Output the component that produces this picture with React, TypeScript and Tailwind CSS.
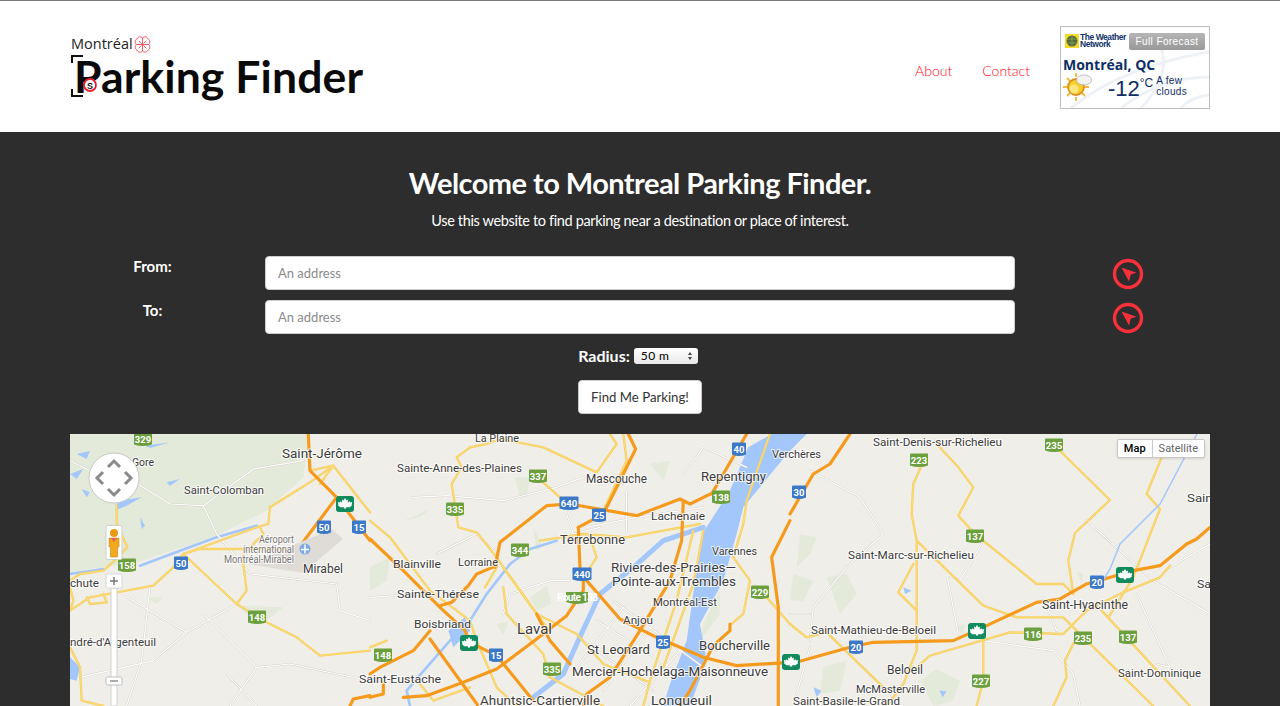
// Montreal Parking Finder landing page
import React from "react";

const bodyFont = { fontFamily: '"Lato", "Open Sans", sans-serif' };

// ── map data: road strings are in 3x crop coordinates, grouped by map section ──
type Roads = { x: number; orange: string[]; yellow: string[]; white: string[]; water: string[]; river: string[]; green: string[] };

const sections: Roads[] = [
  {
    x: 0,
    green: [
      "0,0 715,0 700,130 590,230 430,310 200,385 60,405 0,420",
      "500,515 640,520 590,560 540,545",
      "230,490 280,490 260,510",
      "520,120 555,130 540,155",
    ],
    water: [
      "20,60 60,50 50,75",
      "0,120 40,105 20,135",
      "35,165 60,175 50,190",
      "145,200 215,190 170,215 135,230",
      "225,35 300,25 240,42",
      "290,145 330,135 300,155",
      "210,250 225,275 215,285",
      "0,670 30,700 20,740 0,735",
    ],
    river: ["210,395 330,350 440,310 560,275", "0,420 100,405"],
    white: [
      "0,80 60,110 170,130 300,210 400,215 550,105 700,80",
      "400,215 440,300 540,420 800,450 810,530 900,560",
      "170,490 350,595 500,510",
      "350,595 250,680 30,730",
      "405,545 560,700 480,816",
      "560,700 660,690 800,720 900,740",
      "240,460 215,680 170,816",
      "470,720 560,816",
    ],
    orange: ["715,0 720,110 800,190 900,320", "800,190 740,270 680,350", "840,816 850,795 900,785"],
    yellow: [
      "140,215 140,270 172,340 140,375 100,410 30,420 0,440",
      "0,530 60,490 250,455 310,400 340,360 390,345 680,345",
      "340,360 500,510 590,565 680,610 750,665 900,650",
      "500,510 530,470 520,390 520,360 580,300 570,280",
      "340,360 560,280 595,270 600,220 720,145 790,95 900,235",
      "720,110 790,95 750,150",
      "0,640 30,700 35,800 100,816",
      "0,460 10,500 0,530",
      "50,490 60,510 110,505 100,480",
    ],
  },
  {
    x: 300,
    green: [
      "0,400 60,370 50,440 0,470",
      "480,490 530,455 545,510 500,530",
      "380,570 415,565 400,605",
      "100,260 180,225 150,250",
      "435,130 480,130 470,190 450,190",
      "490,280 520,340 500,350",
      "840,90 900,80 880,140",
      "1000,570 1050,470 1050,540 990,620",
    ],
    water: [
      "1205,0 1135,40 1080,170 1000,295 975,440 950,620 900,750 880,816 960,816 1010,680 990,570 1060,440 1100,300 1120,220 1260,50 1260,0",
      "235,590 285,550 300,590 250,640",
    ],
    river: [
      "1000,280 880,320 790,400 690,480 620,630 580,720 490,790",
      "560,320 480,345 420,390 350,480 300,560 240,620 170,700 110,770 120,816",
    ],
    white: [
      "0,490 150,480 260,520",
      "130,190 230,185 400,200 560,160 640,130",
      "650,280 800,250 1000,220",
      "600,440 540,440 420,480 400,540",
      "730,500 1000,700",
      "680,560 900,700",
      "640,620 850,770",
      "760,520 620,700",
      "850,570 700,770",
      "930,650 780,816",
      "200,360 320,300 380,360",
      "940,120 1000,40 1130,100",
      "770,170 770,290",
      "590,240 610,300 690,280",
    ],
    orange: [
      "0,315 100,410 210,520 285,590 300,625 380,665 490,800",
      "180,615 325,816",
      "375,400 390,325 530,215 600,210 800,245 930,195 960,210 1025,178",
      "210,515 245,505 295,455 320,420 380,395",
      "625,280 700,240 770,100 797,45 775,0",
      "630,400 625,280",
      "640,420 640,470 590,545 500,615 380,705 280,745 170,785 100,790",
      "650,440 750,555 860,610 1000,670 1100,695 1260,685",
      "500,540 540,620 600,690",
      "180,590 130,650 30,700 0,720",
      "40,745 40,780 0,790",
      "940,200 935,320 900,440 810,590 720,730 650,780 640,816",
      "1025,180 1130,0",
      "1260,260 1205,370 1225,520 1225,816",
      "1080,570 1080,590 1030,635 960,770 930,816",
    ],
    yellow: [
      "0,260 60,310 180,470 300,560 320,620 380,760 440,816",
      "390,15 520,40 680,115 740,30 720,0",
      "300,40 350,30 390,15",
      "300,40 260,70 275,100 245,150 265,280 320,295 380,370 400,400 530,580",
      "480,110 570,190",
      "400,400 500,540 620,600 700,690 840,745",
      "345,460 380,400",
      "400,460 410,540 520,660 540,730 700,816",
      "510,320 640,300 770,310 880,290 990,270",
      "1200,0 1130,200 1120,270 1090,370 1140,440 1120,540 1085,570",
      "1190,490 1260,570",
      "660,310 680,370 660,400",
      "760,0 770,80 700,230",
      "970,290 920,500 840,740 820,816",
      "1000,290 970,450 880,700",
      "0,640 50,620",
      "150,750 190,800 300,760",
    ],
  },
  {
    x: 720,
    green: [
      "30,300 80,310 60,360 20,400",
      "110,430 170,420 200,480 150,540",
      "10,420 70,440 40,500 0,500",
      "390,740 440,705 510,740 490,800 430,816",
      "495,580 525,570 520,600",
      "860,415 880,420 875,450",
      "100,700 170,680 150,770 90,780",
    ],
    water: ["0,0 50,0 0,50", "70,760 95,770 80,790", "448,770 470,772 458,790", "340,460 365,470 345,480"],
    river: [],
    white: [
      "60,110 210,190 280,300 170,400 70,520 60,620",
      "575,330 510,440 470,420 505,600",
      "580,620 790,650 850,720 870,816",
      "890,260 1090,440 1260,540",
      "1140,400 1260,330",
      "1040,480 1140,700 1100,690",
      "0,540 60,540",
      "60,640 20,780",
      "760,490 800,590",
    ],
    orange: [
      "0,240 70,120 120,90 180,0",
      "0,690 180,640 250,625 490,620 590,575 740,505 810,495 890,450 1030,410 1110,395 1190,330 1220,315 1260,280",
    ],
    yellow: [
      "440,30 505,100 550,160 505,245 555,300 740,450 820,450 850,480",
      "410,60 370,150 365,240 380,320 380,520 380,650 340,750 290,816",
      "380,320 580,515 680,550 820,550 860,590 1090,816",
      "810,50 850,90 960,198 855,297 835,380 850,480",
      "1115,70 1070,180 1110,225 1030,430 955,550",
      "1140,395 1110,430 1000,475 890,530 820,600 660,595 420,665 380,700",
      "935,530 1200,816",
      "580,620 580,740 560,816",
      "855,620 825,680 830,730 790,816",
      "0,570 50,610 110,595 280,760",
      "370,390 325,475 380,530",
    ],
  },
];

type Label = [string, number, number, number, number?, string?];
// text, x, baseline, width, size, colour
const labels: Label[] = [
  ["Gore", 62, 32, 22, 11],
  ["Saint-Colomban", 114, 60, 80, 11],
  ["Saint-Jérôme", 212, 24, 80, 12.5],
  ["Aéroport", 189, 109, 35, 10, "#777"],
  ["international", 173, 119, 51, 10, "#777"],
  ["Montréal-Mirabel", 154, 129, 70, 10, "#777"],
  ["Mirabel", 233, 139, 40, 12],
  ["chute", 0, 153, 29, 11],
  ["ndré-d'Argenteuil", 0, 212, 86, 11],
  ["Saint-Eustache", 289, 249, 82, 11],
  ["La Plaine", 405, 8, 44, 11],
  ["Sainte-Anne-des-Plaines", 327, 38, 125, 11],
  ["Mascouche", 516, 49, 61, 12],
  ["Repentigny", 631, 47, 65, 12.5],
  ["Lachenaie", 581, 86, 54, 11.5],
  ["Terrebonne", 490, 110, 65, 12.5],
  ["Varennes", 642, 121, 45, 11],
  ["Blainville", 323, 134, 48, 11.5],
  ["Lorraine", 388, 132, 40, 11],
  ["Riviere-des-Prairies—", 541, 138, 125, 12.5],
  ["Pointe-aux-Trembles", 542, 152, 124, 12.5],
  ["Sainte-Thérèse", 327, 164, 82, 11.5],
  ["Montréal-Est", 583, 172, 64, 11],
  ["Boisbriand", 344, 194, 57, 11.5],
  ["Anjou", 553, 190, 30, 11.5],
  ["Laval", 447, 200, 35, 15],
  ["St Leonard", 517, 220, 63, 12.5],
  ["Boucherville", 629, 216, 71, 12.5],
  ["Mercier-Hochelaga-Maisonneuve", 502, 242, 196, 12.5],
  ["Ahuntsic-Cartierville", 410, 271, 120, 12],
  ["Longueuil", 581, 271, 61, 12],
  ["Verchères", 702, 24, 49, 11],
  ["Saint-Denis-sur-Richelieu", 803, 12, 129, 11],
  ["Saint", 1117, 68, 30, 11],
  ["Saint-Marc-sur-Richelieu", 778, 125, 126, 11],
  ["Sa", 1127, 154, 14, 11],
  ["Saint-Hyacinthe", 972, 175, 86, 12.5],
  ["Saint-Mathieu-de-Beloeil", 741, 200, 125, 11],
  ["Saint-Dominique", 1048, 243, 83, 11],
  ["Beloeil", 817, 240, 36, 12.5],
  ["McMasterville", 786, 259, 69, 11],
  ["Saint-Basile-le-Grand", 723, 271, 107, 11],
];

// center x, center y, text
const shields: [number, number, string][] = [
  [73, 5, "329"], [254, 93, "50"], [289, 93, "15"], [57, 131, "158"], [111, 129, "50"], [187, 183, "148"],
  [468, 42, "337"], [385, 75, "335"], [499, 69, "640"], [529, 81, "25"], [669, 15, "40"], [651, 63, "138"],
  [450, 116, "344"], [512, 140, "440"], [690, 158, "229"], [313, 221, "148"], [426, 221, "15"], [482, 235, "335"],
  [593, 208, "25"], [729, 58, "30"], [849, 26, "223"], [984, 11, "235"], [905, 102, "137"], [1027, 148, "20"],
  [963, 200, "116"], [1013, 204, "235"], [1058, 203, "137"], [786, 213, "20"], [911, 247, "227"],
];
const blueRoutes = ["50", "15", "640", "25", "40", "440", "30", "20"];
const maples: [number, number][] = [[275, 70], [399, 209], [721, 228], [1055, 141], [907, 197]];

function Shield({ x, y, text }: { x: number; y: number; text: string }) {
  const blue = blueRoutes.includes(text);
  const w = text.length === 3 ? (blue ? 19 : 18) : 14;
  const h = 13;
  const l = x - w / 2;
  const t = y - h / 2;
  return (
    <g>
      <path
        d={`M${l + 1} ${t}h${w - 2}q1 0 1 1v${h - 2}q-${w / 2} 3-${w} 0v-${h - 2}q0-1 1-1z`}
        fill={blue ? "#3b78c8" : "#6c9f3e"}
      />
      <text x={x} y={y + 3.5} textAnchor="middle" fontSize={9.5} fontWeight={700} fill="#fff" fontFamily="Roboto, sans-serif">
        {text}
      </text>
    </g>
  );
}

function Maple({ x, y }: { x: number; y: number }) {
  return (
    <g transform={`translate(${x} ${y})`}>
      <rect x={-9} y={-8} width={18} height={16} rx={3} fill="#118a5e" />
      <path d="M0-6l1.5 2.5 1.5-1-.3 3 2-1.2.6 1.2 2-.4-.8 2.4.8.6-2.6 2.2H1l.2 1.2h-2.4L-1 3.3h-3.7l-2.6-2.2.8-.6-.8-2.4 2 .4.6-1.2 2 1.2-.3-3 1.5 1z" fill="#fff" />
    </g>
  );
}

function MapCanvas() {
  return (
    <svg viewBox="0 0 1140 272" className="block h-full w-full">
      <rect width="1140" height="272" fill="#f0eee9" />
      {sections.map((s) => (
        <g key={s.x} transform={`translate(${s.x} 0) scale(0.3333)`} fill="none" strokeLinejoin="round" strokeLinecap="round">
          {s.green.map((p, i) => <polygon key={i} points={p} fill="#e4ead9" />)}
          {s.water.map((p, i) => <polygon key={i} points={p} fill="#a3c7fb" />)}
          {s.river.map((p, i) => <polyline key={i} points={p} stroke="#a3c7fb" strokeWidth={i === 0 && s.x === 300 ? 15 : 8} />)}
          {s.white.map((p, i) => <polyline key={i} points={p} stroke="#d3cfc7" strokeWidth={6} />)}
          {s.white.map((p, i) => <polyline key={i} points={p} stroke="#fff" strokeWidth={3.5} />)}
          {s.yellow.map((p, i) => <polyline key={i} points={p} stroke="#f6cf5e" strokeWidth={7} />)}
          {s.yellow.map((p, i) => <polyline key={i} points={p} stroke="#fbdc7c" strokeWidth={3} />)}
          {s.orange.map((p, i) => <polyline key={i} points={p} stroke="#f59a1d" strokeWidth={9.5} />)}
        </g>
      ))}
      <polyline points="1127,0 1090,70 1050,110 1040,135 1032,148" fill="none" stroke="#a3c7fb" strokeWidth={1.5} />
      {/* airport */}
      <polygon points="178,130 262,95 273,105 233,139" fill="#dfdbd6" />
      <circle cx={235} cy={115} r={5.5} fill="#7ea9e6" />
      <path d="M235 110.500v9M231 115.500l8 0" stroke="#fff" strokeWidth={1.5} />
      {labels.map(([t, x, y, w, size = 11, colour = "#3c3c3c"]) => (
        <text
          key={t}
          x={x}
          y={y}
          textLength={w}
          lengthAdjust="spacingAndGlyphs"
          fontSize={size}
          fill={colour}
          stroke="#ffffff"
          strokeOpacity={0.75}
          strokeWidth={2}
          paintOrder="stroke"
          fontFamily="Roboto, sans-serif"
        >
          {t}
        </text>
      ))}
      {shields.map(([x, y, t], i) => <Shield key={i} x={x} y={y} text={t} />)}
      <g>
        <path d="M496 158h22v10q-11 4-22 0z" fill="#6c9f3e" />
        <text x={487} y={167} textLength={41} fontSize={10} fontWeight={700} fill="#fff" fontFamily="Roboto, sans-serif">Route 138</text>
      </g>
      {maples.map(([x, y], i) => <Maple key={i} x={x} y={y} />)}
      {/* pan control */}
      <circle cx={44} cy={44} r={25} fill="#fff" stroke="#c8c8c8" strokeWidth={1} />
      <path d="M33 38l-6 6 6 6M55 38l6 6-6 6M38 33l6-6 6 6M38 55l6 6 6-6" fill="none" stroke="#8a8a8a" strokeWidth={3} />
      {/* pegman */}
      <rect x={36} y={91.500} width={16} height={34} rx={1.500} fill="#fff" stroke="#cfcfcf" />
      <circle cx={44} cy={99} r={4} fill="#e99b16" />
      <path d="M39 104h10v9h-1.500v10h-7v-10H39z" fill="#f3a81d" stroke="#b9790e" strokeWidth={0.5} />
      <path d="M41 104h6l-3 4z" fill="#e8605a" />
      {/* zoom slider */}
      <rect x={41} y={154} width={6} height={118} fill="#fff" stroke="#cfcfcf" />
      <rect x={36} y={140} width={16} height={14} rx={1.500} fill="#fff" stroke="#d8d8d8" />
      <path d="M40 147h8M44 143v8" stroke="#777" strokeWidth={1.500} />
      <rect x={36} y={243} width={16} height={8} rx={1.500} fill="#fff" stroke="#bdbdbd" />
      <path d="M40 247h8" stroke="#777" strokeWidth={1.200} />
    </svg>
  );
}

function LocateIcon() {
  return (
    <svg viewBox="0 0 32 32" className="h-8 w-8">
      <circle cx="16" cy="16" r="13.500" fill="none" stroke="#f7303c" strokeWidth="3.400" />
      <path d="M9.500 9.500l15 5.300-5.700 1.700-1.800 7z" fill="#f7303c" />
    </svg>
  );
}

function Logo() {
  return (
    <div className="relative h-[70px] w-[295px]">
      <div className="mt-[5px] flex h-[16px] items-center gap-[1px] text-[14.500px] leading-none text-[#222]" style={{ fontFamily: '"Open Sans", sans-serif' }}>
        Montréal
        <svg viewBox="0 0 18 18" className="h-[17px] w-[17px]" fill="none" stroke="#f0414d" strokeWidth="0.900">
          <path d="M9 2C7 0 4 0.500 3.500 3 1 3.500 0.500 7 2.500 9 0.500 11 1 14.500 3.500 15 4 17.500 7 18 9 16 11 18 14 17.500 14.500 15 17 14.500 17.500 11 15.500 9 17.500 7 17 3.500 14.500 3 14 0.500 11 0 9 2Z" />
          <path d="M9 2v14M2.500 9h13M5 5l3 3M13 5l-3 3M5 13l3-3M13 13l-3-3" />
        </svg>
      </div>
      <div className="ml-[3px] mt-[-4px] whitespace-nowrap text-[44.500px] font-bold leading-[54px] tracking-[0.100px] text-[#0a0a0a]" style={bodyFont}>
        Parking Finder
      </div>
      {/* bracket corners and no-parking mark sit over the P */}
      <svg viewBox="0 0 30 46" className="absolute left-0 top-[22px] h-[46px] w-[30px]" fill="none">
        <path d="M12 2H1v7M1 35v7h11" stroke="#111" strokeWidth="2" />
        <circle cx="19" cy="31" r="6" fill="#fff" stroke="#e5202e" strokeWidth="1.800" />
        <text x="19" y="34.500" textAnchor="middle" fontSize="9" fontWeight="700" fill="#111" fontFamily="Liberation Sans">S</text>
      </svg>
    </div>
  );
}

function WeatherBadge() {
  return (
    <div className="relative h-[83px] w-[150px] overflow-hidden border border-[#bdbdbd] bg-white" style={{ fontFamily: '"Liberation Sans", sans-serif' }}>
      <svg viewBox="0 0 148 81" className="absolute inset-0 h-full w-full" fill="none" stroke="#eef2f7" strokeWidth="3">
        <path d="M10 81Q60 40 148 25M60 81Q100 50 148 50M120 81Q130 70 148 68M100 20Q110 50 80 81" />
      </svg>
      <div className="relative flex items-center px-[4px] pt-[6px]">
        <svg viewBox="0 0 14 14" className="h-[14px] w-[14px] shrink-0">
          <rect width="14" height="14" fill="#f6dc2a" />
          <circle cx="7" cy="7" r="5.500" fill="#4f6b3a" />
          <path d="M2 5h10M2 9h10M7 2v10" stroke="#a6b56a" strokeWidth="0.600" />
        </svg>
        <div className="ml-[1px] w-[45px] whitespace-nowrap text-[8.500px] font-bold leading-[7.500px] tracking-[-0.450px] text-[#12346e]">
          The Weather<br />Network
        </div>
        <div className="ml-[4px] flex h-[17px] w-[78px] items-center justify-center rounded-[2px] bg-gradient-to-b from-[#b5b5b5] to-[#999] text-[10px] tracking-[0.400px] text-white">
          Full Forecast
        </div>
      </div>
      <div className="relative ml-[2px] mt-[7px] text-[14px] font-bold leading-[15px] text-[#0d2d66]" style={{ fontFamily: '"Open Sans", sans-serif' }}>
        Montréal, QC
      </div>
      <div className="relative flex items-start">
        <svg viewBox="0 0 32 30" className="ml-[2px] h-[30px] w-[32px] shrink-0">
          <g stroke="#f3b93a" strokeWidth="1.800">
            <path d="M13 1v4M13 25v4M0 15h4M22 15h4M4 6l3 3M4 24l3-3M22 24l-3-3" />
          </g>
          <circle cx="13" cy="15" r="8" fill="#f6cf2e" stroke="#d98f1a" strokeWidth="1.800" />
          <circle cx="11" cy="17" r="4.500" fill="#fbe67c" />
          <ellipse cx="21" cy="8" rx="7.500" ry="5" fill="#f3f3f3" stroke="#a9a9a9" strokeWidth="0.700" />
        </svg>
        <div className="ml-[13px] mt-[3px] flex items-start text-[#0d2d66]">
          <span className="text-[22px] leading-[27px]">-12</span>
          <span className="mt-[1px] text-[12px] leading-[14px]">°C</span>
        </div>
        <div className="ml-[3px] mt-[3px] text-[10px] leading-[11px] tracking-[0.300px] text-[#0d2d66]">
          A few<br />clouds
        </div>
      </div>
    </div>
  );
}

function AddressRow({ label }: { label: string }) {
  return (
    <div className="flex items-start">
      <label className="w-[165px] text-center text-[15px] font-bold leading-5 text-white">{label}</label>
      <input
        placeholder="An address"
        className="ml-[30px] h-[34px] w-[750px] rounded border border-[#ccc] bg-white px-3 text-[13px] text-[#555] outline-none placeholder:text-[#8b8b8b]"
      />
      <div className="flex h-[34px] w-[226px] items-center justify-center pt-[2px]">
        <LocateIcon />
      </div>
    </div>
  );
}

export default function App() {
  return (
    <div className="h-[706px] overflow-hidden bg-[#2d2d2d]" style={bodyFont}>
      {/* ── header ── */}
      <header className="flex h-[132px] items-center justify-between border-t border-[#7a7a7a] bg-white pl-[71px] pr-[70px]">
        <Logo />
        <div className="flex items-center">
          <nav className="mt-[7px] flex gap-[30px] text-[14px] font-light text-[#ff0a20]">
            <a href="#">About</a>
            <a href="#">Contact</a>
          </nav>
          <div className="ml-[30px] mt-[1px]">
            <WeatherBadge />
          </div>
        </div>
      </header>

      {/* ── search form ── */}
      <section className="pt-[32px]">
        <h1 className="text-center text-[29px] font-bold leading-[38px] tracking-[-0.550px] text-white">Welcome to Montreal Parking Finder.</h1>
        <p className="mt-[9px] text-center text-[14.500px] leading-[20px] tracking-[-0.360px] text-white">Use this website to find parking near a destination or place of interest.</p>

        <div className="mt-[25px] flex flex-col gap-[10px] pl-[70px]">
          <AddressRow label="From:" />
          <AddressRow label="To:" />
        </div>

        <div className="mt-[14px] flex h-[16px] items-center justify-center gap-[4px] pr-[4px]">
          <span className="text-[16px] font-bold leading-[16px] text-white">Radius:</span>
          <div className="relative h-[16px] w-[64px]">
            <select className="block h-[16px] w-full appearance-none rounded-[3px] bg-gradient-to-b from-white to-[#e8e8e8] pl-[7px] text-xs leading-[16px] tracking-[0.400px] text-black outline-none">
              <option>50 m</option>
            </select>
            <svg viewBox="0 0 6 10" className="pointer-events-none absolute right-[5px] top-[3px] h-[10px] w-[6px]">
              <path d="M3 1l2 3H1zM3 9L1 6h4z" fill="#444" />
            </svg>
          </div>
        </div>

        <div className="mt-[16px] flex justify-center">
          <button className="h-[34px] w-[124px] rounded border border-[#ccc] bg-white pt-[1px] text-[13.200px] text-[#333]">Find Me Parking!</button>
        </div>

        <div className="relative mx-[70px] mt-[20px] h-[272px] overflow-hidden">
          <MapCanvas />
          <div className="absolute right-[5px] top-[5px] flex h-[19px] rounded-[2px] border border-[#c8c8c8] bg-white text-[11px] leading-[17px] shadow-sm" style={{ fontFamily: "Roboto, sans-serif" }}>
            <span className="border-r border-[#ccc] px-[6px] font-medium text-black">Map</span>
            <span className="px-[6px] text-[#666]">Satellite</span>
          </div>
        </div>
      </section>
    </div>
  );
}
